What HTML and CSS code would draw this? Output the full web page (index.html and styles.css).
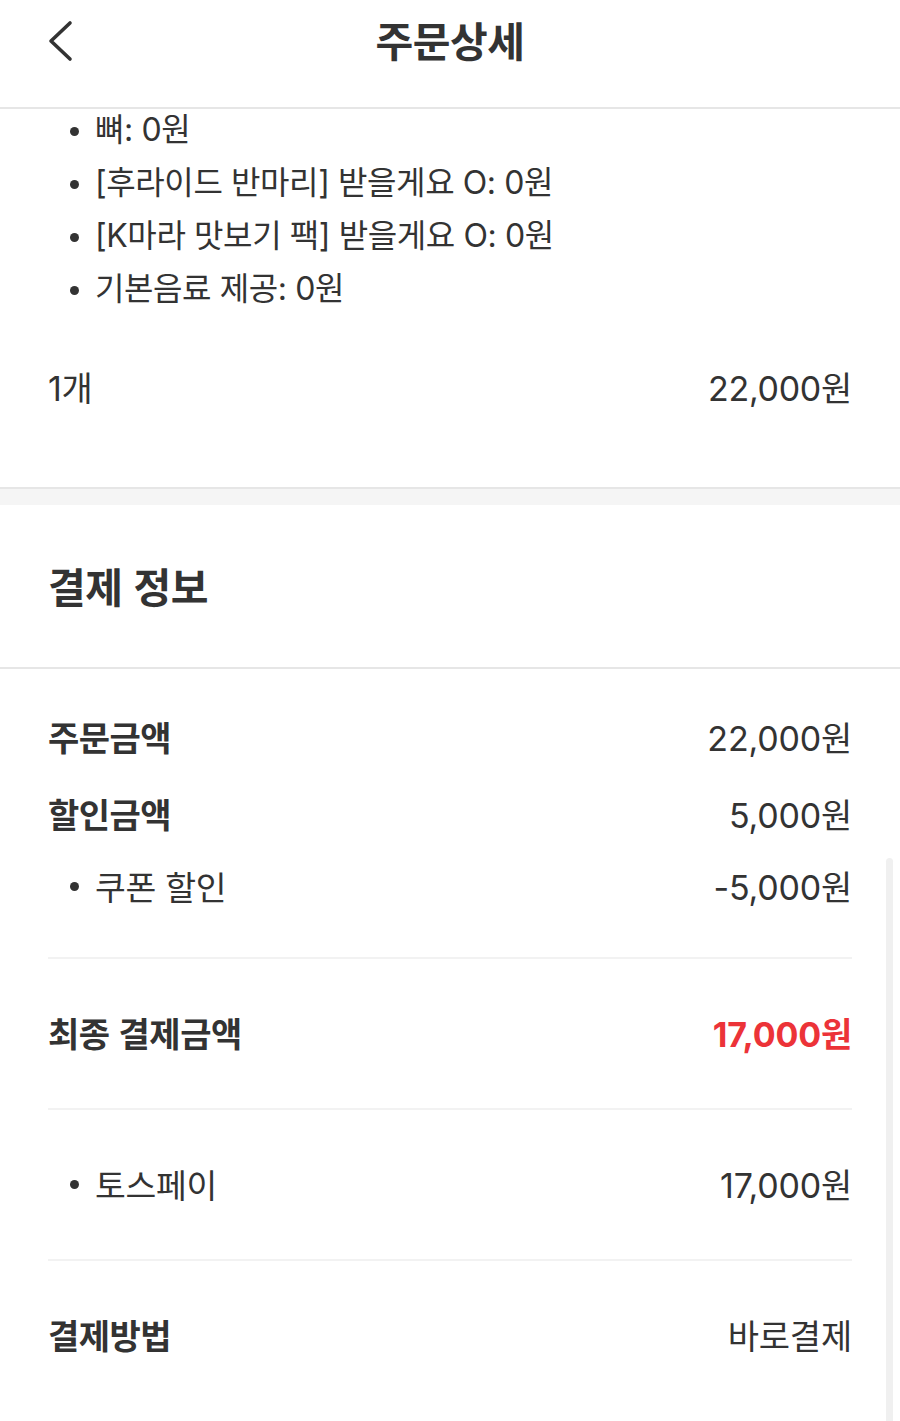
FILE: index.html
```html
<!DOCTYPE html>
<html lang="ko">
<head>
<meta charset="utf-8">
<title>주문상세</title>
<link rel="stylesheet" href="styles.css">
</head>
<body>
<div class="page">
  <header class="topbar">
    <button class="back" aria-label="뒤로">
      <svg width="28" height="42" viewBox="0 0 28 42"><path d="M24 3 L5 21 L24 39" fill="none" stroke="#333" stroke-width="3.6" stroke-linecap="round" stroke-linejoin="round"/></svg>
    </button>
    <h1 class="title">주문상세</h1>
    <span></span>
  </header>

  <section class="menu">
    <ul class="options">
      <li>뼈: 0원</li>
      <li>[후라이드 반마리] 받을게요 O: 0원</li>
      <li>[K마라 맛보기 팩] 받을게요 O: 0원</li>
      <li>기본음료 제공: 0원</li>
    </ul>
    <div class="qty-row">
      <span>1개</span>
      <span>22,000원</span>
    </div>
  </section>

  <div class="gap"></div>

  <section class="pay">
    <h2 class="pay-title">결제 정보</h2>
    <div class="pay-body">
      <div class="block first">
        <div class="row spaced"><span class="label">주문금액</span><span class="value">22,000원</span></div>
        <div class="row"><span class="label">할인금액</span><span class="value">5,000원</span></div>
        <div class="row"><span class="sub">쿠폰 할인</span><span class="value">-5,000원</span></div>
      </div>
      <div class="block">
        <div class="row"><span class="label">최종 결제금액</span><span class="value total">17,000원</span></div>
      </div>
      <div class="block">
        <div class="row"><span class="sub">토스페이</span><span class="value">17,000원</span></div>
      </div>
      <div class="block last">
        <div class="row"><span class="label">결제방법</span><span class="value">바로결제</span></div>
      </div>
    </div>
  </section>
  <div class="scrollbar"></div>
</div>
</body>
</html>
```

FILE: styles.css
```css
* { box-sizing: border-box; }
html, body { margin: 0; padding: 0; background: #fff; }
body {
  font-family: Inter, "Noto Sans CJK KR", "Noto Sans", sans-serif;
  color: #333;
  overflow: hidden;
}
.page { position: relative; width: 900px; min-height: 1421px; }

.topbar {
  height: 109px;
  display: grid;
  grid-template-columns: 1fr auto 1fr;
  align-items: center;
  border-bottom: 2px solid #e6e6e6;
  padding: 0 46px;
  position: relative;
  z-index: 2;
  background: #fff;
}
.back {
  justify-self: start;
  border: 0;
  background: none;
  padding: 0;
  width: 28px;
  height: 42px;
  margin-top: -26px;
  display: flex;
}
.title {
  margin: -30px 0 0;
  font-family: "Noto Sans CJK KR", sans-serif;
  font-size: 41px;
  font-weight: 700;
  letter-spacing: -0.5px;
  color: #333;
}

.menu { padding: 0 48px; }
.options {
  list-style: none;
  margin: -6px 0 0;
  padding: 0 0 0 22px;
}
.options li {
  position: relative;
  font-size: 32px;
  line-height: 53px;
  height: 53px;
  padding-left: 25px;
  letter-spacing: -0.4px;
}
.options li::before, .sub::before {
  content: "";
  position: absolute;
  left: 0;
  top: 50%;
  width: 9px;
  height: 9px;
  margin-top: -3px;
  border-radius: 50%;
  background: #333;
}
.qty-row {
  display: flex;
  justify-content: space-between;
  align-items: center;
  height: 70px;
  margin-top: 36px;
  margin-bottom: 66px;
  font-size: 34px;
  letter-spacing: -0.3px;
}

.gap {
  height: 18px;
  background: #f5f5f5;
  border-top: 2px solid #e6e6e6;
}

.pay-title {
  margin: 0;
  height: 164px;
  display: flex;
  align-items: center;
  padding: 0 48px 2px;
  font-family: "Noto Sans CJK KR", sans-serif;
  font-size: 41px;
  font-weight: 700;
  letter-spacing: -0.5px;
  border-bottom: 2px solid #e6e6e6;
}
.pay-body { padding: 0 48px; }
.block {
  padding: 37px 0 40px;
  border-bottom: 2px solid #f2f2f2;
}
.block.first { padding-top: 31px; padding-bottom: 36px; }
.block.last { border-bottom: 0; }
.row {
  display: flex;
  justify-content: space-between;
  align-items: center;
  height: 72px;
}
.row.spaced { margin-bottom: 5px; }
.label {
  font-family: "Noto Sans CJK KR", sans-serif;
  font-size: 34px;
  font-weight: 700;
  letter-spacing: -0.5px;
}
.sub {
  position: relative;
  font-size: 33.5px;
  padding-left: 47px;
  letter-spacing: -0.3px;
}
.sub::before { left: 22px; }
.value {
  font-size: 34px;
  letter-spacing: -0.2px;
}
.value.total {
  color: #ec3338;
  font-weight: 700;
}
.scrollbar {
  position: absolute;
  right: 7px;
  top: 858px;
  width: 7px;
  height: 580px;
  background: #f0f0f0;
  border-radius: 4px;
}
```
